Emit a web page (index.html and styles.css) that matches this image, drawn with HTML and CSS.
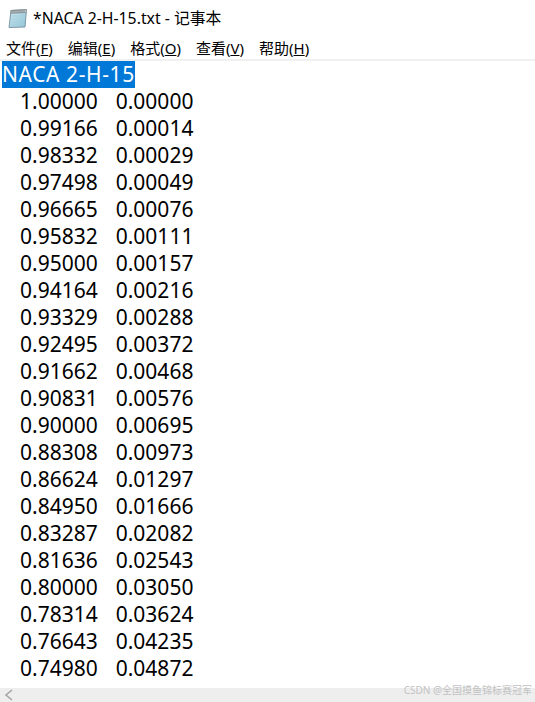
FILE: index.html
```html
<!DOCTYPE html>
<html lang="zh">
<head>
  <meta charset="UTF-8">
  <title>*NACA 2-H-15.txt - 记事本</title>
  <link rel="stylesheet" href="styles.css">
</head>
<body>
  <div class="window">
    <!-- title bar -->
    <div class="titlebar">
      <svg class="app-icon" width="20" height="22" viewBox="0 0 20 22">
        <defs>
          <linearGradient id="pad" x1="0" y1="0" x2="1" y2="1">
            <stop offset="0" stop-color="#d3e9f1"/>
            <stop offset="1" stop-color="#8cc2d6"/>
          </linearGradient>
        </defs>
        <path d="M3 3.5 L18.5 2.5 L17 20 L1 20.5 Z" fill="url(#pad)" stroke="#7d99a5" stroke-width="1"/>
        <path d="M3 3.5 L18.5 2.5 L18.2 5.5 L2.7 6.5 Z" fill="#c9ced1" stroke="#8a949a" stroke-width="0.8"/>
        <path d="M4 3 V6 M6 3 V6 M8 3 V6 M10 3 V6 M12 3 V6 M14 3 V6 M16 3 V5.5" stroke="#67747a" stroke-width="0.8" fill="none"/>
        <path d="M3 9 H16.5 M2.8 12 H16.2 M2.5 15 H16 M2.2 18 H15.8" stroke="#a4cfde" stroke-width="1" fill="none"/>
      </svg>
      <span class="title">*NACA 2-H-15.txt - 记事本</span>
    </div>

    <!-- menu -->
    <div class="menubar">
      <span>文件(<u>F</u>)</span>
      <span>编辑(<u>E</u>)</span>
      <span>格式(<u>O</u>)</span>
      <span>查看(<u>V</u>)</span>
      <span>帮助(<u>H</u>)</span>
    </div>

    <!-- text area -->
    <div class="editor">
      <div class="heading"><span class="selected">NACA 2-H-15</span></div>
      <div class="row"><span>1.00000</span><span>0.00000</span></div>
      <div class="row"><span>0.99166</span><span>0.00014</span></div>
      <div class="row"><span>0.98332</span><span>0.00029</span></div>
      <div class="row"><span>0.97498</span><span>0.00049</span></div>
      <div class="row"><span>0.96665</span><span>0.00076</span></div>
      <div class="row"><span>0.95832</span><span>0.00111</span></div>
      <div class="row"><span>0.95000</span><span>0.00157</span></div>
      <div class="row"><span>0.94164</span><span>0.00216</span></div>
      <div class="row"><span>0.93329</span><span>0.00288</span></div>
      <div class="row"><span>0.92495</span><span>0.00372</span></div>
      <div class="row"><span>0.91662</span><span>0.00468</span></div>
      <div class="row"><span>0.90831</span><span>0.00576</span></div>
      <div class="row"><span>0.90000</span><span>0.00695</span></div>
      <div class="row"><span>0.88308</span><span>0.00973</span></div>
      <div class="row"><span>0.86624</span><span>0.01297</span></div>
      <div class="row"><span>0.84950</span><span>0.01666</span></div>
      <div class="row"><span>0.83287</span><span>0.02082</span></div>
      <div class="row"><span>0.81636</span><span>0.02543</span></div>
      <div class="row"><span>0.80000</span><span>0.03050</span></div>
      <div class="row"><span>0.78314</span><span>0.03624</span></div>
      <div class="row"><span>0.76643</span><span>0.04235</span></div>
      <div class="row"><span>0.74980</span><span>0.04872</span></div>
    </div>

    <!-- scrollbar -->
    <div class="scrollbar">
      <svg width="12" height="14" viewBox="0 0 12 14">
        <path d="M9 2 L3 7 L9 12" fill="none" stroke="#a6a6a6" stroke-width="1.6"/>
      </svg>
    </div>
    <div class="watermark">CSDN @全国摸鱼锦标赛冠军</div>
  </div>
</body>
</html>
```

FILE: styles.css
```css
* {
  margin: 0;
  padding: 0;
  box-sizing: border-box;
}
html, body {
  height: 100%;
  background: #fff;
  overflow: hidden;
  font-family: "Noto Sans", "Noto Sans CJK SC", sans-serif;
  color: #000;
}

.window {
  position: relative;
  height: 702px;
  display: flex;
  flex-direction: column;
}

.titlebar {
  height: 35px;
  display: flex;
  align-items: center;
  padding-left: 8px;
  gap: 5px;
}

.title {
  font-size: 15.8px;
}

.menubar {
  height: 24px;
  padding-left: 6px;
  display: flex;
  gap: 15px;
  align-items: center;
  font-size: 15px;
}

.editor {
  flex: 1;
  border-top: 2px solid #f0f0f0;
  padding-left: 2px;
  font-size: 21px;
  line-height: 27px;
}

.heading {
  height: 27px;
}

.selected {
  display: inline-block;
  height: 27px;
  background: #0078d7;
  color: #fff;
  letter-spacing: 0.6px;
}

.row {
  height: 27px;
  display: flex;
  gap: 18px;
  padding-left: 18px;
}

.scrollbar {
  height: 14px;
  background: #eeeeee;
  display: flex;
  align-items: center;
  padding-left: 3px;
}

.watermark {
  position: absolute;
  right: 3px;
  bottom: 5px;
  font-size: 10px;
  color: #c2c2c2;
}
```
